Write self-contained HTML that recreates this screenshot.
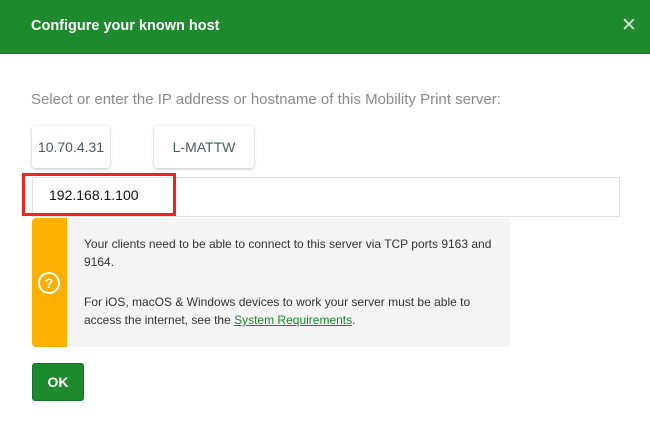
<!DOCTYPE html>
<html><head><style>
*{box-sizing:border-box;margin:0;padding:0}
body{width:650px;height:434px;background:#fff;font-family:"Liberation Sans",sans-serif;position:relative;overflow:hidden}
.hdr{position:absolute;left:0;top:0;width:650px;height:54px;background:#1d8a2e;border-bottom:1px solid #17722a}
.hdr .t{position:absolute;left:31px;top:18px;color:#fff;font-weight:bold;font-size:14.5px}
.hdr .x{position:absolute;left:621px;top:14px;color:#cfe6d2;font-size:19px}
.ins{position:absolute;left:31px;top:91px;color:#8a8a8a;font-size:15px}
.b{position:absolute;top:126px;height:42px;background:#fff;border-radius:3px;box-shadow:0 1px 3px rgba(0,0,0,.25);color:#4a5a60;font-size:14px;text-align:center;line-height:42px}
.inp{position:absolute;left:32px;top:177px;width:588px;height:40px;border:1px solid #e2e2e2}
.red{position:absolute;left:22px;top:173px;width:154px;height:43px;border:3px solid #f2231c}
.val{position:absolute;left:49px;top:187px;font-size:14px;color:#111}
.info{position:absolute;left:32px;top:218px;width:479px;height:129px;background:#f4f4f4;border-radius:4px;overflow:hidden}
.strip{position:absolute;left:0;top:0;width:35px;height:129px;background:#fdb000}
.q{position:absolute;left:6px;top:54px;width:22px;height:22px;border:2px solid #fff;border-radius:50%;color:#fff;font-weight:bold;font-size:14px;text-align:center;line-height:18px}
.txt{position:absolute;left:84px;font-size:12px;color:#333;line-height:18px;width:420px}
.txt a{color:#1d8a2e}
.ok{position:absolute;left:32px;top:363px;width:52px;height:38px;background:#1d8a2e;border:1px solid #17722a;border-radius:3px;color:#fff;font-weight:bold;font-size:14px;text-align:center;line-height:36px}
</style></head><body>
<div class="hdr"><div class="t">Configure your known host</div><div class="x">✕</div></div>
<div class="ins">Select or enter the IP address or hostname of this Mobility Print server:</div>
<div class="b" style="left:32px;width:78px">10.70.4.31</div>
<div class="b" style="left:154px;width:100px">L-MATTW</div>
<div class="inp"></div>
<div class="red"></div>
<div class="val">192.168.1.100</div>
<div class="info"><div class="strip"><div class="q">?</div></div></div>
<div class="txt" style="top:235px">Your clients need to be able to connect to this server via TCP ports 9163 and<br>9164.</div>
<div class="txt" style="top:293px">For iOS, macOS &amp; Windows devices to work your server must be able to<br>access the internet, see the <a href="#">System Requirements</a>.</div>
<div class="ok">OK</div>
</body></html>
